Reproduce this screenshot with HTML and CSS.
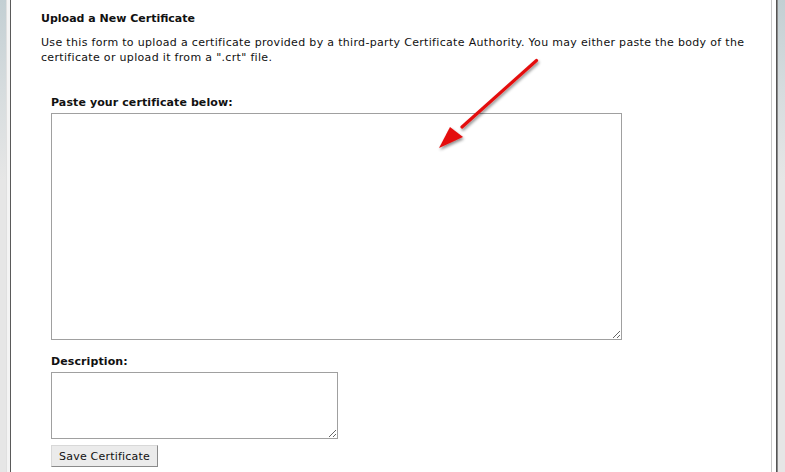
FILE: index.html
```html
<!DOCTYPE html>
<html>
<head>
<meta charset="utf-8">
<link rel="stylesheet" href="styles.css">
</head>
<body>
<div class="page">
  <div class="frame">
    <div class="panel">
      <h2 class="title">Upload a New Certificate</h2>
      <p class="intro">Use this form to upload a certificate provided by a third-party Certificate Authority. You may either paste the body of the certificate or upload it from a ".crt" file.</p>
      <form class="form">
        <label class="label" for="cert">Paste your certificate below:</label>
        <textarea id="cert" class="area area-cert"></textarea>
        <label class="label label-desc" for="desc">Description:</label>
        <textarea id="desc" class="area area-desc"></textarea>
        <button type="button" class="btn">Save Certificate</button>
      </form>
    </div>
  </div>
</div>
<svg class="arrow" width="120" height="110" viewBox="0 0 120 110">
  <defs>
    <filter id="sh" x="-30%" y="-30%" width="160%" height="160%">
      <feDropShadow dx="1" dy="2" stdDeviation="1.6" flood-color="#000" flood-opacity="0.45"/>
    </filter>
  </defs>
  <g filter="url(#sh)">
    <path d="M97.5 4.5 L23 71" stroke="#e41010" stroke-width="3.2" stroke-linecap="round" fill="none"/>
    <path d="M0 92 L11 71 L24 81 Z" fill="#e41010"/>
  </g>
</svg>
</body>
</html>
```
FILE: styles.css
```css
html, body {
  margin: 0;
  padding: 0;
  height: 100%;
  overflow: hidden;
}
body {
  font-family: "DejaVu Sans", Verdana, sans-serif;
  color: #111;
  position: relative;
}
.page {
  display: flex;
  height: 100%;
  background: linear-gradient(#c3cfd3 0, #d6dcde 90px, #e6e6e6 180px, #e6e6e6 100%);
  padding: 0 7px 0 6px;
  box-sizing: border-box;
}
.frame {
  flex: 1;
  display: flex;
  border-left: 1px solid #e0e0e0;
  padding-left: 3px;
  background: #f4f4f4;
}
.panel {
  flex: 1;
  background: #fff;
  border-left: 1px solid #5a5a5a;
  border-right: 1px solid #c8c8c8;
  box-shadow: 4px 0 0 #fff, 5px 0 0 #555, 6px 0 0 #8a8a8a;
  margin-right: 6px;
  padding: 11px 0 0 30px;
}
.title {
  margin: 0;
  font-size: 11px;
  line-height: 15px;
  font-weight: bold;
}
.intro {
  margin: 9px 0 0;
  font-size: 11px;
  line-height: 15px;
  width: 720px;
  letter-spacing: 0.32px;
}
.form {
  margin: 30px 0 0 10px;
  display: flex;
  flex-direction: column;
  align-items: flex-start;
}
.label {
  font-size: 11px;
  line-height: 15px;
  font-weight: bold;
  letter-spacing: 0.1px;
}
.area {
  display: block;
  box-sizing: border-box;
  border: 1px solid #a0a0a0;
  margin: 3px 0 0;
  padding: 2px;
  font-family: inherit;
  background: #fff;
}
.area-cert {
  width: 571px;
  height: 227px;
}
.label-desc {
  margin-top: 14px;
}
.area-desc {
  width: 287px;
  height: 67px;
  margin-top: 3px;
}
.btn {
  margin-top: 6px;
  width: 107px;
  height: 22px;
  box-sizing: border-box;
  padding: 0;
  font-family: inherit;
  font-size: 11px;
  color: #111;
  background: #ebebeb;
  border: 1px solid;
  border-color: #d8d8d8 #8a8a8a #8a8a8a #d8d8d8;
  letter-spacing: 0.2px;
}
.arrow {
  position: absolute;
  left: 439px;
  top: 56px;
  overflow: visible;
}
```
